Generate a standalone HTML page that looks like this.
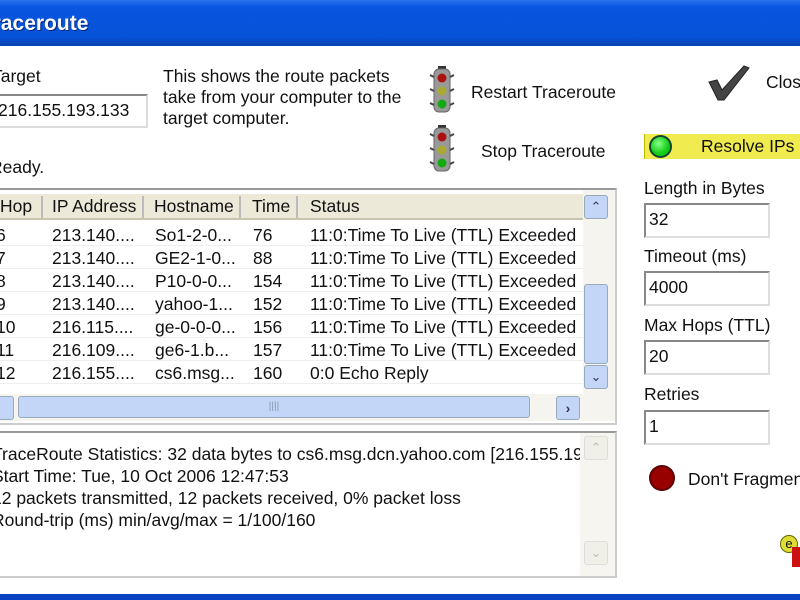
<!DOCTYPE html>
<html><head><style>
*{margin:0;padding:0;box-sizing:border-box}
body{width:800px;height:600px;overflow:hidden;background:#fff;position:relative;font-family:"Liberation Sans",sans-serif;font-size:17.5px;color:#111}
.a{position:absolute;white-space:nowrap}
.title{left:0;top:0;width:800px;height:46px;background:linear-gradient(#2a74ee 0,#0a55e0 15%,#0652d8 80%,#0842b0 100%)}
.inp{position:absolute;border:2px solid #888;border-right-color:#ddd;border-bottom-color:#ddd;background:#fff;padding-left:3px}
.tl{position:absolute;width:26px;height:48px}
.row{position:absolute;left:0;width:583px;height:23px;border-bottom:1px solid #eee}
.row span{position:absolute;top:2px}
.hd span{position:absolute;top:2px}
</style></head><body>
<div class="a title"></div>
<div class="a" style="left:-19px;top:12px;color:#fff;font-weight:bold;font-size:21px;text-shadow:1px 1px 0 #0a2a80">Traceroute</div>
<div class="a" style="left:-8px;top:66px">Target</div>
<div class="inp" style="left:-4px;top:94px;width:152px;height:34px;line-height:28px;padding-left:0">216.155.193.133</div>
<div class="a" style="left:163px;top:66px;line-height:21px;white-space:normal;width:245px">This shows the route packets take from your computer to the target computer.</div>
<div class="a" style="left:-10px;top:157px">Ready.</div>

<svg class="tl" style="left:429px;top:66px" viewBox="0 0 26 48"><rect x="9" y="0" width="8" height="3" fill="#333"/><rect x="5" y="3" width="16" height="43" rx="5" fill="#999" stroke="#666"/><path d="M1 9l4 2M1 23l4 2M1 37l4 2M25 9l-4 2M25 23l-4 2M25 37l-4 2" stroke="#444" stroke-width="2"/><circle cx="13" cy="12" r="4.5" fill="#a11"/><circle cx="13" cy="25" r="4.5" fill="#aa3"/><circle cx="13" cy="38" r="4.5" fill="#1a1"/></svg>
<svg class="tl" style="left:429px;top:125px" viewBox="0 0 26 48"><rect x="9" y="0" width="8" height="3" fill="#333"/><rect x="5" y="3" width="16" height="43" rx="5" fill="#999" stroke="#666"/><path d="M1 9l4 2M1 23l4 2M1 37l4 2M25 9l-4 2M25 23l-4 2M25 37l-4 2" stroke="#444" stroke-width="2"/><circle cx="13" cy="12" r="4.5" fill="#a11"/><circle cx="13" cy="25" r="4.5" fill="#aa3"/><circle cx="13" cy="38" r="4.5" fill="#1a1"/></svg>
<div class="a" style="left:471px;top:82px">Restart Traceroute</div>
<div class="a" style="left:481px;top:141px">Stop Traceroute</div>
<svg class="a" style="left:706px;top:62px" width="44" height="40" viewBox="0 0 44 40"><path d="M3 20l8-2 5 10L38 4l5 2L18 38h-6z" fill="#444" stroke="#222"/></svg>
<div class="a" style="left:766px;top:72px">Close</div>

<div class="a" style="left:644px;top:134px;width:160px;height:25px;background:#f0ec50;border-left:1px solid #bb0"></div>
<div class="a" style="left:649px;top:135px;width:23px;height:23px;border-radius:50%;background:radial-gradient(circle at 40% 35%,#8f8,#1c1 60%);border:2px solid #143"></div>
<div class="a" style="left:701px;top:136px">Resolve IPs</div>
<div class="a" style="left:644px;top:178px">Length in Bytes</div>
<div class="inp" style="left:644px;top:203px;width:126px;height:35px;line-height:29px">32</div>
<div class="a" style="left:644px;top:246px">Timeout (ms)</div>
<div class="inp" style="left:644px;top:271px;width:126px;height:35px;line-height:29px">4000</div>
<div class="a" style="left:644px;top:315px">Max Hops (TTL)</div>
<div class="inp" style="left:644px;top:340px;width:126px;height:35px;line-height:29px">20</div>
<div class="a" style="left:644px;top:384px">Retries</div>
<div class="inp" style="left:644px;top:410px;width:126px;height:35px;line-height:29px">1</div>
<div class="a" style="left:649px;top:465px;width:26px;height:26px;border-radius:50%;background:radial-gradient(circle,#900 55%,#400 70%,#aaa 80%)"></div>
<div class="a" style="left:688px;top:469px">Don't Fragment</div>
<div class="a" style="left:780px;top:535px;width:18px;height:18px;border-radius:50%;background:#dd3;border:1px solid #660;font-size:13px;line-height:16px;text-align:center">e</div>
<div class="a" style="left:792px;top:547px;width:10px;height:20px;background:#c11"></div>

<!-- table -->
<div class="a" style="left:-2px;top:188px;width:619px;height:237px;border:2px solid #999;border-right-color:#ccc;border-bottom-color:#ccc;background:#fff;overflow:hidden">
 <div class="a hd" style="left:0;top:4px;width:583px;height:26px;background:#ece9d8;border-bottom:2px solid #c8c4b0">
  <span style="left:0">Hop</span><span style="left:52px">IP Address</span><span style="left:154px">Hostname</span><span style="left:252px">Time</span><span style="left:310px">Status</span>
  <div class="a" style="left:41px;top:2px;width:2px;height:22px;background:#bbb"></div>
  <div class="a" style="left:142px;top:2px;width:2px;height:22px;background:#bbb"></div>
  <div class="a" style="left:239px;top:2px;width:2px;height:22px;background:#bbb"></div>
  <div class="a" style="left:296px;top:2px;width:2px;height:22px;background:#bbb"></div>
 </div>
 <div class="row" style="top:33px"><span style="left:-4px">6</span><span style="left:52px">213.140....</span><span style="left:155px">So1-2-0...</span><span style="left:253px">76</span><span style="left:310px">11:0:Time To Live (TTL) Exceeded</span></div>
 <div class="row" style="top:56px"><span style="left:-4px">7</span><span style="left:52px">213.140....</span><span style="left:155px">GE2-1-0...</span><span style="left:253px">88</span><span style="left:310px">11:0:Time To Live (TTL) Exceeded</span></div>
 <div class="row" style="top:79px"><span style="left:-4px">8</span><span style="left:52px">213.140....</span><span style="left:155px">P10-0-0...</span><span style="left:253px">154</span><span style="left:310px">11:0:Time To Live (TTL) Exceeded</span></div>
 <div class="row" style="top:102px"><span style="left:-4px">9</span><span style="left:52px">213.140....</span><span style="left:155px">yahoo-1...</span><span style="left:253px">152</span><span style="left:310px">11:0:Time To Live (TTL) Exceeded</span></div>
 <div class="row" style="top:125px"><span style="left:-4px">10</span><span style="left:52px">216.115....</span><span style="left:155px">ge-0-0-0...</span><span style="left:253px">156</span><span style="left:310px">11:0:Time To Live (TTL) Exceeded</span></div>
 <div class="row" style="top:148px"><span style="left:-4px">11</span><span style="left:52px">216.109....</span><span style="left:155px">ge6-1.b...</span><span style="left:253px">157</span><span style="left:310px">11:0:Time To Live (TTL) Exceeded</span></div>
 <div class="row" style="top:171px"><span style="left:-4px">12</span><span style="left:52px">216.155....</span><span style="left:155px">cs6.msg...</span><span style="left:253px">160</span><span style="left:310px">0:0 Echo Reply</span></div>
 <div class="a" style="left:583px;top:0;width:32px;height:204px;background:#f5f4ee"></div>
 <div class="a" style="left:584px;top:5px;width:24px;height:24px;border-radius:3px;background:#c4d6f8;border:1px solid #9ab;color:#335;font-size:13px;text-align:center;line-height:22px">&#8963;</div>
 <div class="a" style="left:584px;top:94px;width:24px;height:80px;border-radius:3px;background:#c4d6f8;border:1px solid #9ab"></div>
 <div class="a" style="left:584px;top:175px;width:24px;height:24px;border-radius:3px;background:#c4d6f8;border:1px solid #9ab;color:#335;font-size:13px;text-align:center;line-height:22px">&#8964;</div>
 <div class="a" style="left:0;top:204px;width:615px;height:27px;background:#f5f4ee"></div>
 <div class="a" style="left:-10px;top:206px;width:24px;height:24px;border-radius:3px;background:#c4d6f8;border:1px solid #9ab"></div>
 <div class="a" style="left:18px;top:206px;width:512px;height:22px;border-radius:3px;background:#c4d6f8;border:1px solid #9ab;color:#89a;font-size:10px;text-align:center;line-height:20px">||||</div>
 <div class="a" style="left:556px;top:206px;width:24px;height:24px;border-radius:3px;background:#c4d6f8;border:1px solid #9ab;color:#335;text-align:center;line-height:22px;font-size:14px;font-weight:bold">&rsaquo;</div>
</div>

<!-- stats -->
<div class="a" style="left:-2px;top:431px;width:619px;height:147px;border:2px solid #999;border-right-color:#ccc;border-bottom-color:#ccc;background:#fff;overflow:hidden">
 <div class="a" style="left:-8px;top:10px;line-height:22px">TraceRoute Statistics: 32 data bytes to cs6.msg.dcn.yahoo.com [216.155.193.133]<br>Start Time: Tue, 10 Oct 2006 12:47:53<br>12 packets transmitted, 12 packets received, 0% packet loss<br>Round-trip (ms) min/avg/max = 1/100/160</div>
 <div class="a" style="left:580px;top:0;width:35px;height:143px;background:#f6f5f0"></div>
 <div class="a" style="left:584px;top:3px;width:24px;height:24px;border-radius:3px;background:#f0efe8;border:1px solid #ddd;color:#bbb;text-align:center;line-height:22px;font-size:13px">&#8963;</div>
 <div class="a" style="left:584px;top:108px;width:24px;height:24px;border-radius:3px;background:#f0efe8;border:1px solid #ddd;color:#bbb;text-align:center;line-height:22px;font-size:13px">&#8964;</div>
</div>
<div class="a" style="left:0;top:594px;width:800px;height:6px;background:#0842c0"></div>
</body></html>
